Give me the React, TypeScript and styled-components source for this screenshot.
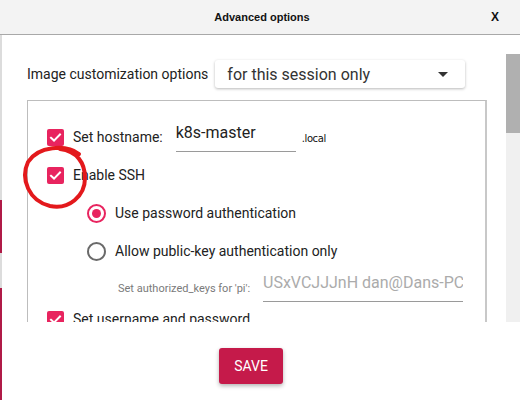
import React from "react";
import styled, { createGlobalStyle } from "styled-components";

const Global = createGlobalStyle`
  html, body { margin: 0; padding: 0; background: #ffffff; }
  body { font-family: Roboto, "Liberation Sans", sans-serif; }
  * { box-sizing: border-box; }
`;

const Frame = styled.div`
  position: relative;
  width: 520px;
  height: 400px;
  overflow: hidden;
  display: flex;
  flex-direction: column;
  background: #ffffff;
`;

const TitleBar = styled.div`
  height: 35px;
  flex: none;
  background: #f3f3f3;
  border-bottom: 1px solid #a8a8a8;
  display: grid;
  grid-template-columns: 1fr auto 1fr;
  align-items: center;
  font-family: "Liberation Sans", Arial, sans-serif;
  font-weight: bold;
  font-size: 11px;
  color: #111;
`;

const Title = styled.div`
  grid-column: 2;
  padding-left: 4px;
`;

const Close = styled.div`
  grid-column: 3;
  justify-self: end;
  padding-right: 21px;
  font-size: 12px;
`;

const Main = styled.div`
  flex: 1;
  display: flex;
  min-height: 0;
`;

const LeftEdge = styled.div`
  width: 2px;
  flex: none;
  display: flex;
  flex-direction: column;
`;

const EdgeSeg = styled.div<{ $h: number; $c: string }>`
  height: ${(p) => p.$h}px;
  flex: ${(p) => (p.$h === 0 ? 1 : "none")};
  background: ${(p) => p.$c};
`;

const Body = styled.div`
  flex: 1;
  display: flex;
  flex-direction: column;
  min-width: 0;
`;

const ScrollRow = styled.div`
  height: 287px;
  flex: none;
  display: flex;
  overflow: hidden;
`;

const Content = styled.div`
  flex: 1;
  padding: 25px 0 0 25px;
  display: flex;
  flex-direction: column;
  min-width: 0;
`;

const Scrollbar = styled.div`
  width: 14px;
  flex: none;
  margin-top: 19px;
  background: #f0f0f0;
  display: flex;
  flex-direction: column;
`;

const Thumb = styled.div`
  height: 79px;
  background: #b0b0b0;
`;

const TopRow = styled.div`
  display: flex;
  align-items: center;
  height: 28px;
  gap: 7px;
`;

const Label = styled.span<{ $size?: number }>`
  font-size: ${(p) => p.$size ?? 14}px;
  color: #222;
  white-space: nowrap;
`;

const Dropdown = styled.div`
  width: 250px;
  height: 28px;
  background: #fff;
  border-radius: 3px;
  box-shadow: 0 1px 3px rgba(0, 0, 0, 0.28);
  display: flex;
  align-items: center;
  justify-content: space-between;
  padding: 0 17px 0 12px;
  font-size: 16px;
  color: #333;
`;

const Caret = styled.div`
  width: 0;
  height: 0;
  border-left: 5px solid transparent;
  border-right: 5px solid transparent;
  border-top: 5px solid #333;
`;

const Group = styled.div`
  margin-top: 12px;
  width: 460px;
  flex: none;
  border: 1px solid #bdbdbd;
  border-right: 2px solid #c8c8c8;
  padding: 17px 0 0 19px;
  display: flex;
  flex-direction: column;
`;

const Row = styled.div<{ $h: number; $indent?: number }>`
  height: ${(p) => p.$h}px;
  padding-left: ${(p) => p.$indent ?? 0}px;
  display: flex;
  align-items: center;
  flex: none;
`;

const CheckBox = styled.div`
  width: 17px;
  height: 17px;
  border-radius: 2px;
  background: #e8245f;
  display: flex;
  align-items: center;
  justify-content: center;
  margin-right: 9px;
  flex: none;
`;

const RadioOuter = styled.div<{ $on: boolean }>`
  width: 19px;
  height: 19px;
  border-radius: 50%;
  border: 2px solid ${(p) => (p.$on ? "#e8245f" : "#6a6a6a")};
  display: flex;
  align-items: center;
  justify-content: center;
  margin-right: 9px;
  flex: none;
`;

const RadioDot = styled.div`
  width: 9px;
  height: 9px;
  border-radius: 50%;
  background: #e8245f;
`;

const TextField = styled.div<{ $w: number; $color: string }>`
  width: ${(p) => p.$w}px;
  height: 30px;
  border-bottom: 1px solid #9a9a9a;
  display: flex;
  align-items: flex-start;
  padding-top: 1px;
  font-size: 16px;
  color: ${(p) => p.$color};
  white-space: nowrap;
  overflow: hidden;
`;

const Suffix = styled.span`
  font-family: "DejaVu Sans", Verdana, sans-serif;
  font-size: 10px;
  letter-spacing: -0.4px;
  color: #111;
  margin-left: 6px;
  margin-top: 2px;
`;

const SmallLabel = styled.span`
  font-size: 11px;
  color: #7a7a7a;
  width: 145px;
  flex: none;
  margin-top: 2px;
`;

const Footer = styled.div`
  flex: 1;
  display: flex;
  justify-content: center;
  align-items: flex-start;
  padding-top: 26px;
  padding-right: 20px;
`;

const SaveButton = styled.button`
  width: 64px;
  height: 36px;
  border: none;
  border-radius: 3px;
  background: #c51a4a;
  color: #fff;
  font-family: Roboto, "Liberation Sans", sans-serif;
  font-size: 14px;
  box-shadow: 0 2px 4px rgba(0, 0, 0, 0.3);
  padding: 0;
`;

const Annotation = styled.svg`
  position: absolute;
  left: 0;
  top: 0;
  pointer-events: none;
`;

const Check = () => (
  <svg width="13" height="13" viewBox="0 0 13 13">
    <path d="M2 6.8 L5 9.6 L11 3.4" fill="none" stroke="#fff" strokeWidth="2" strokeLinecap="square" />
  </svg>
);

export default function App() {
  return (
    <Frame>
      <Global />
      <TitleBar>
        <Title>Advanced options</Title>
        <Close>X</Close>
      </TitleBar>
      <Main>
        <LeftEdge>
          <EdgeSeg $h={165} $c="#dcdcdc" />
          <EdgeSeg $h={53} $c="#b01a47" />
          <EdgeSeg $h={35} $c="#dcdcdc" />
          <EdgeSeg $h={0} $c="#b01a47" />
        </LeftEdge>
        <Body>
          <ScrollRow>
            <Content>
              <TopRow>
                <Label>Image customization options</Label>
                <Dropdown>
                  <span>for this session only</span>
                  <Caret />
                </Dropdown>
              </TopRow>
              <Group>
                <Row $h={38}>
                  <CheckBox><Check /></CheckBox>
                  <Label>Set hostname:</Label>
                  <Row $h={30} $indent={13}>
                    <TextField $w={120} $color="#222">k8s-master</TextField>
                    <Suffix>.local</Suffix>
                  </Row>
                </Row>
                <Row $h={38}>
                  <CheckBox><Check /></CheckBox>
                  <Label>Enable SSH</Label>
                </Row>
                <Row $h={38} $indent={40}>
                  <RadioOuter $on={true}><RadioDot /></RadioOuter>
                  <Label>Use password authentication</Label>
                </Row>
                <Row $h={38} $indent={40}>
                  <RadioOuter $on={false} />
                  <Label>Allow public-key authentication only</Label>
                </Row>
                <Row $h={34} $indent={71}>
                  <SmallLabel>Set authorized_keys for 'pi':</SmallLabel>
                  <TextField $w={200} $color="#ababab">USxVCJJJnH dan@Dans-PC</TextField>
                </Row>
                <Row $h={30}>
                  <CheckBox><Check /></CheckBox>
                  <Label>Set username and password</Label>
                </Row>
              </Group>
            </Content>
            <Scrollbar>
              <Thumb />
            </Scrollbar>
          </ScrollRow>
          <Footer>
            <SaveButton>SAVE</SaveButton>
          </Footer>
        </Body>
      </Main>
      <Annotation width="520" height="400" viewBox="0 0 520 400">
        <path
          d="M79 154 C66 144 38 146 28 162 C20 179 29 201 50 206 C69 210 85 196 85 178 C85 163 77 151 60 149"
          fill="none"
          stroke="#e3191c"
          strokeWidth="4"
          strokeLinecap="round"
        />
      </Annotation>
    </Frame>
  );
}
